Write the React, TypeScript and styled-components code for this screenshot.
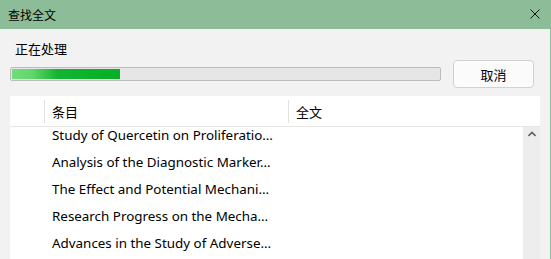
import React from "react";
import { styled, createGlobalStyle } from "styled-components";

const GlobalStyle = createGlobalStyle`
  html, body {
    margin: 0;
    padding: 0;
    overflow: hidden;
    background: #f2f2f2;
  }
  * {
    box-sizing: border-box;
  }
`;

const Window = styled.div`
  width: 551px;
  height: 259px;
  display: flex;
  flex-direction: column;
  background: #f2f2f2;
  border-right: 1px solid #8cbd98;
  font-family: "Noto Sans", "Noto Sans CJK SC", sans-serif;
  color: #000;
  overflow: hidden;
`;

const TitleBar = styled.div`
  height: 29px;
  flex: none;
  display: flex;
  align-items: center;
  justify-content: space-between;
  padding: 0 10px 0 8px;
  background: #8cbd98;
  font-family: "Noto Sans CJK SC", sans-serif;
  font-size: 12px;
`;

const CloseButton = styled.button`
  width: 10px;
  height: 10px;
  padding: 0;
  border: none;
  background: transparent;
  display: flex;
  margin-top: -1px;
  &:hover {
    cursor: pointer;
  }
`;

const Content = styled.div`
  flex: 1;
  display: flex;
  flex-direction: column;
  padding: 0 10px;
  min-height: 0;
`;

const StatusLabel = styled.div`
  padding: 11px 0 0 5px;
  height: 31px;
  line-height: 18px;
  font-family: "Noto Sans CJK SC", sans-serif;
  font-size: 13px;
`;

const ProgressRow = styled.div`
  height: 28px;
  display: flex;
  align-items: center;
  gap: 12px;
  padding-right: 6px;
`;

const Track = styled.div`
  width: 431px;
  height: 14px;
  padding: 1px;
  border: 1px solid #bcbcbc;
  border-radius: 2px;
  background: #e6e6e6;
`;

const Fill = styled.div`
  height: 100%;
  background: linear-gradient(
    90deg,
    #72dd7b 0%,
    #62d76c 18%,
    #14b431 42%,
    #06b025 100%
  );
`;

const Button = styled.button`
  width: 81px;
  height: 28px;
  border: 1px solid #d2d2d2;
  border-radius: 4px;
  background: #fbfbfb;
  font-family: "Noto Sans CJK SC", sans-serif;
  font-size: 13px;
  color: #000;
  padding: 0;
  &:hover {
    cursor: pointer;
  }
`;

const List = styled.div`
  margin-top: 8px;
  flex: 1;
  min-height: 0;
  display: flex;
  flex-direction: column;
  background: #fff;
`;

const HeaderRow = styled.div`
  height: 31px;
  flex: none;
  display: grid;
  grid-template-columns: 34px 244px 1fr;
  border-bottom: 1px solid #e5e5e5;
  font-family: "Noto Sans CJK SC", sans-serif;
  font-size: 13px;
`;

const HeaderCell = styled.div<{ $divider?: boolean }>`
  display: flex;
  align-items: center;
  padding-left: ${({ $divider }) => ($divider ? "7px" : "0")};
  border-left: ${({ $divider }) => ($divider ? "1px solid #e3e3e3" : "none")};
  margin: 4px 0 3px;
  padding-bottom: 1px;
`;

const Body = styled.div`
  flex: 1;
  min-height: 0;
  display: flex;
  overflow: hidden;
`;

const Rows = styled.div`
  flex: 1;
  margin-top: -6px;
`;

const Row = styled.div`
  height: 27px;
  display: grid;
  grid-template-columns: 35px 244px 1fr;
  align-items: center;
  font-size: 13.4px;
`;

const TitleCell = styled.div`
  grid-column: 2;
  padding: 0 0 0 7px;
  white-space: nowrap;
`;

const ScrollBar = styled.div`
  width: 17px;
  flex: none;
  background: #ededed;
  display: flex;
  justify-content: center;
  padding-top: 4px;
`;

const entries = [
  "Study of Quercetin on Proliferatio…",
  "Analysis of the Diagnostic Marker…",
  "The Effect and Potential Mechani…",
  "Research Progress on the Mecha…",
  "Advances in the Study of Adverse…",
];

export default function App() {
  return (
    <>
      <GlobalStyle />
      <Window>
        <TitleBar>
          <span>查找全文</span>
          <CloseButton aria-label="关闭">
            <svg width="10" height="10" viewBox="0 0 10 10">
              <path d="M0.5 0.5 L9.5 9.5 M9.5 0.5 L0.5 9.5" stroke="#111" strokeWidth="1" />
            </svg>
          </CloseButton>
        </TitleBar>
        <Content>
          <StatusLabel>正在处理</StatusLabel>
          <ProgressRow>
            <Track>
              <Fill style={{ width: `${(108 / 427) * 100}%` }} />
            </Track>
            <Button>取消</Button>
          </ProgressRow>
          <List>
            <HeaderRow>
              <HeaderCell />
              <HeaderCell $divider>条目</HeaderCell>
              <HeaderCell $divider>全文</HeaderCell>
            </HeaderRow>
            <Body>
              <Rows>
                {entries.map((t) => (
                  <Row key={t}>
                    <TitleCell>{t}</TitleCell>
                  </Row>
                ))}
              </Rows>
              <ScrollBar>
                <svg width="8" height="6" viewBox="0 0 8 6">
                  <path d="M0.5 5 L4 1.5 L7.5 5" stroke="#606060" strokeWidth="1.6" fill="none" />
                </svg>
              </ScrollBar>
            </Body>
          </List>
        </Content>
      </Window>
    </>
  );
}
